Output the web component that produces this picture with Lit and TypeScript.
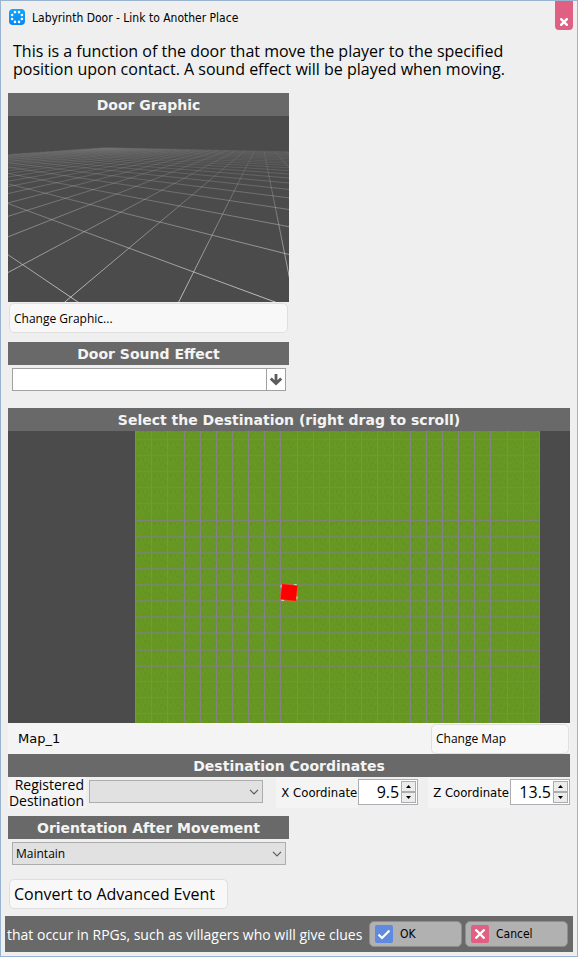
import { LitElement, html, svg, css } from "lit";
import { customElement, property } from "lit/decorators.js";

/* Shared look of the flat buttons and section headings. */
const shared = css`
  *, *::before, *::after { box-sizing: border-box; }
  h2 {
    margin: 0;
    height: 23px;
    background: #696969;
    color: #f4f4f4;
    font: bold 14px/24px "DejaVu Sans", sans-serif;
    text-align: center;
    white-space: nowrap;
  }
  button { font-family: inherit; color: #000; cursor: pointer; }
  .flat {
    height: 30px;
    padding: 0 4px;
    background: #f8f8f8;
    border: 1px solid #dfdfdf;
    border-radius: 5px;
    font: 12px "Open Sans", sans-serif;
    text-align: left;
  }
`;

type Point = [number, number];

/* Projects a floor cell corner (i, j) onto the preview. */
const project = (i: number, j: number): Point => {
  const d = 1 - 0.209 * i + 0.3486 * j;
  return [
    (62 + 101 * i + 271.1 * j) / d / 3 - 6,
    (464 - 20 * i + 28.2 * j) / d / 3 - 6,
  ];
};

@customElement("door-preview")
export class DoorPreview extends LitElement {
  static styles = css`
    :host { display: block; background: #4b4b4b; }
    svg { display: block; width: 100%; height: 186px; }
  `;

  private lines(): [Point, Point][] {
    const out: [Point, Point][] = [];
    for (let i = -22; i <= 8; i++) {
      const near = Math.max(-1, (-0.8 + 0.209 * i) / 0.3486);
      out.push([project(i, near), project(i, 24)]);
    }
    for (let j = 0; j <= 24; j++) {
      const near = Math.min(22, (0.8 + 0.3486 * j) / 0.209);
      out.push([project(near, j), project(-22, j)]);
    }
    return out;
  }

  render() {
    return html`<svg viewBox="0 0 281 186" preserveAspectRatio="xMidYMid slice" role="img" aria-label="Door preview">
      <defs>
        <linearGradient id="fade" gradientUnits="userSpaceOnUse" x1="0" y1="30" x2="0" y2="186">
          <stop offset="0" stop-color="#bbb" stop-opacity="0.08" />
          <stop offset="0.12" stop-color="#bbb" stop-opacity="0.16" />
          <stop offset="0.4" stop-color="#c0c0c0" stop-opacity="0.4" />
          <stop offset="1" stop-color="#d4d4d4" stop-opacity="0.85" />
        </linearGradient>
      </defs>
      ${this.lines().map(([a, b]) => svg`<line x1=${a[0]} y1=${a[1]} x2=${b[0]} y2=${b[1]} stroke="url(#fade)" />`)}
    </svg>`;
  }
}

@customElement("map-view")
export class MapView extends LitElement {
  static styles = css`
    :host { display: block; background: #4b4b4b; }
    svg { display: block; width: 100%; height: 292px; }
  `;

  render() {
    const cols = Array.from({ length: 26 }, (_, n) => Math.floor(127.56 + n * 16.15));
    const rows = Array.from({ length: 18 }, (_, n) => Math.floor(8.5 + n * 16.12));
    return html`<svg viewBox="0 0 562 292" preserveAspectRatio="xMidYMid slice" role="img" aria-label="Destination map">
      <defs>
        <pattern id="grass" patternUnits="userSpaceOnUse" x="127.5" y="8.5" width="16.15" height="16.12">
          <rect width="17" height="17" fill="#679723" />
          <path fill="#5d8d22" opacity=".7" d="M2 3h2v2h-2zM7 2h1v3h-1zM11 4h2v1h-2zM4 8h1v2h-1zM9 7h2v2h-2zM13 9h1v3h-1zM2 12h2v1h-2zM7 12h1v2h-1zM10 12h2v1h-2z" />
          <path fill="#719b21" opacity=".7" d="M5 4h1v2h-1zM9 3h1v2h-1zM13 5h1v2h-1zM2 7h1v2h-1zM6 9h2v1h-2zM11 10h1v2h-1zM5 13h1v1h-1z" />
        </pattern>
      </defs>
      <rect x="127" width="405" height="292" fill="url(#grass)" />
      <g shape-rendering="crispEdges">
        ${rows.map((y, n) => svg`<rect x="127" y=${y} width="405" height=${n > 5 && n < 15 ? 2 : 1} fill=${n > 5 && n < 15 ? "#778762" : "#7d8375"} />`)}
        ${cols.map((x) => svg`<rect x=${x} y="0" width="1" height="292" fill="#848282" />`)}
      </g>
      <g transform="translate(281 161.500) rotate(6)">
        <path d="M-8-8H8V8H-8z" fill="red" stroke="#ff5a1e" stroke-width=".6" />
        <path d="M4-8.500H7M8.500 3V6M-7 8.500H-4M-8.500-7V-4" stroke="#b8ffd0" stroke-width=".8" />
      </g>
    </svg>`;
  }
}

@customElement("coord-field")
export class CoordField extends LitElement {
  @property() label = "";
  @property() value = "";

  static styles = css`
    * { box-sizing: border-box; }
    :host { display: flex; align-items: flex-start; }
    label {
      height: 31px;
      padding: 0 1px 0 5px;
      background: #f4f4f4;
      font-size: 13px;
      line-height: 32px;
      white-space: nowrap;
    }
    .box {
      display: flex;
      width: 60px;
      height: 26px;
      margin-top: 2px;
      padding: 1px;
      background: #fff;
      border: 1px solid #abadb3;
    }
    input {
      flex: 1;
      min-width: 0;
      padding: 0 2px 0 0;
      border: 0;
      outline: 0;
      background: none;
      font: 16px "Open Sans", sans-serif;
      text-align: right;
    }
    .spin { display: flex; flex-direction: column; width: 15px; }
    button {
      display: grid;
      place-items: center;
      flex: 1;
      min-height: 0;
      padding: 0;
      background: #ececec;
      border: 1px solid #acacac;
    }
    svg { display: block; }
  `;

  render() {
    return html`
      <label for="n">${this.label}</label>
      <div class="box">
        <input id="n" type="text" inputmode="decimal" .value=${this.value} />
        <div class="spin">
          <button aria-label="Increase"><svg width="5" height="3"><path d="M0 3 2.500 0 5 3z" /></svg></button>
          <button aria-label="Decrease"><svg width="5" height="3"><path d="M0 0 2.500 3 5 0z" /></svg></button>
        </div>
      </div>`;
  }
}

@customElement("app-root")
export class AppRoot extends LitElement {
  static styles = [shared, css`
    :host {
      display: block;
      font: 12px "DejaVu Sans Condensed", sans-serif;
      color: #000;
    }
    .window {
      display: flex;
      flex-direction: column;
      min-height: 100vh;
      background: #efefef;
      border: 1px solid #99b4d1;
    }
    header { display: flex; align-items: flex-start; height: 37px; padding: 0 4px 0 8px; }
    .logo { flex: none; margin-top: 8px; }
    h1 { flex: 1; margin: 0 0 0 7px; font-size: 12px; font-weight: normal; line-height: 34px; }
    .close {
      display: grid;
      place-items: end center;
      width: 18px;
      height: 29px;
      padding: 0 0 4px;
      background: #e06083;
      border: 0;
      border-radius: 0 0 4px 4px;
    }
    main { display: flex; flex-direction: column; flex: 1; padding: 4px 7px 0; }
    .intro { max-width: 520px; margin: 0 0 15px 5px; font: 16px/18px "Open Sans", sans-serif; }
    .half { width: 50%; }
    .door { display: flex; flex-direction: column; }
    .door .flat { margin: 1px 1px 9px; }
    .combo {
      display: flex;
      height: 23px;
      margin: 3px 3px 17px 4px;
      background: #fff;
      border: 1px solid #a0a0a0;
    }
    .combo input { flex: 1; min-width: 0; padding: 0 3px; border: 0; outline: 0; background: none; font: inherit; }
    .combo button { display: grid; place-items: center; width: 19px; padding: 0; border: 0; border-left: 1px solid #a0a0a0; background: #fff; }
    .map-row {
      display: flex;
      align-items: center;
      justify-content: space-between;
      height: 31px;
      padding: 0 1px 0 10px;
      background: #f4f4f4;
      font: 13px "DejaVu Sans", sans-serif;
    }
    .map-row .flat { width: 138px; }
    .coords { display: flex; height: 39px; }
    .coords .reg {
      width: 78px;
      height: 31px;
      padding-right: 2px;
      background: #f4f4f4;
      font: 14px/16px "Open Sans", sans-serif;
      text-align: right;
    }
    .coords coord-field + coord-field { margin-left: 10px; }
    .select { position: relative; display: flex; height: 23px; }
    .select select {
      width: 100%;
      padding: 0 20px 0 3px;
      appearance: none;
      background: #e1e1e1;
      border: 1px solid #adadad;
      border-radius: 0;
      color: #000;
      font: 12px "Open Sans", sans-serif;
    }
    .select svg { position: absolute; right: 4px; top: 9px; pointer-events: none; }
    .coords .select { flex: 1; margin: 3px 13px 0 3px; }
    .orient .select { margin: 3px 3px 14px 4px; }
    .convert { align-self: flex-start; width: 219px; margin: 0 0 7px 1px; }
    .convert.flat { font-size: 16px; white-space: nowrap; }
    footer {
      display: flex;
      align-items: center;
      gap: 3px;
      height: 36px;
      margin: 0 4px 4px;
      padding: 0 5px 0 2px;
      background: #696969;
    }
    .ticker {
      flex: 1;
      min-width: 0;
      margin: 0 2px 0 0;
      overflow: hidden;
      color: #fff;
      font: 14px "Open Sans", sans-serif;
      white-space: nowrap;
    }
    .action {
      display: flex;
      align-items: center;
      height: 26px;
      padding: 0 5px;
      background: #b1b1b1;
      border: 1px solid #8e8e8e;
      border-radius: 5px;
      font-size: 12px;
    }
    .ok { width: 93px; gap: 7px; }
    .cancel { width: 103px; gap: 7px; }
  `];

  private chevron() {
    return svg`<svg width="10" height="6" viewBox="0 0 10 6" fill="none" stroke="#5c5c5c" stroke-width="1.2"><path d="M1 .8 5 4.800 9 .8" /></svg>`;
  }

  render() {
    const dots = Array.from({ length: 8 }, (_, n) => (n * Math.PI) / 4 + Math.PI / 8);
    return html`
      <div class="window">
        <header>
          <svg class="logo" width="16" height="16" viewBox="0 0 16 16" aria-hidden="true">
            <defs><linearGradient id="blue" x1="0" y1="0" x2="0" y2="1"><stop offset="0" stop-color="#0ea8fb" /><stop offset="1" stop-color="#0a84f2" /></linearGradient></defs>
            <rect width="16" height="16" rx="4" fill="url(#blue)" />
            ${dots.map((t) => svg`<circle cx=${8 + 5.3 * Math.cos(t)} cy=${8 + 5.3 * Math.sin(t)} r="1.3" fill="#fff" />`)}
          </svg>
          <h1>Labyrinth Door - Link to Another Place</h1>
          <button class="close" aria-label="Close">
            <svg width="8" height="8" viewBox="0 0 8 8" stroke="#fff" stroke-width="2.4"><path d="M.4.4 7.600 7.600M7.600.4.4 7.600" /></svg>
          </button>
        </header>
        <main>
          <p class="intro">This is a function of the door that move the player to the specified position upon contact. A sound effect will be played when moving.</p>
          <section class="half door">
            <h2>Door Graphic</h2>
            <door-preview></door-preview>
            <button class="flat">Change Graphic...</button>
          </section>
          <section class="half">
            <h2 id="sound">Door Sound Effect</h2>
            <div class="combo">
              <input type="text" aria-labelledby="sound" />
              <button aria-label="Choose sound">
                <svg width="12" height="12" viewBox="0 0 12 12" fill="none" stroke="#5c5c5c" stroke-width="2.8"><path d="M6 0V9M.8 4.500 6 9.500 11.200 4.500" /></svg>
              </button>
            </div>
          </section>
          <section>
            <h2>Select the Destination (right drag to scroll)</h2>
            <map-view></map-view>
            <div class="map-row"><span>Map_1</span><button class="flat">Change Map</button></div>
          </section>
          <section>
            <h2>Destination Coordinates</h2>
            <div class="coords">
              <label class="reg" for="reg">Registered Destination</label>
              <div class="select"><select id="reg"><option></option></select>${this.chevron()}</div>
              <coord-field label="X Coordinate" value="9.5"></coord-field>
              <coord-field label="Z Coordinate" value="13.5"></coord-field>
            </div>
          </section>
          <section class="half orient">
            <h2 id="orient">Orientation After Movement</h2>
            <div class="select"><select aria-labelledby="orient"><option>Maintain</option></select>${this.chevron()}</div>
          </section>
          <button class="flat convert">Convert to Advanced Event</button>
        </main>
        <footer>
          <p class="ticker">that occur in RPGs, such as villagers who will give clues</p>
          <button class="action ok">
            <svg width="18" height="18" viewBox="0 0 18 18" fill="none"><rect width="18" height="18" rx="2" fill="#5f8ade" /><path d="M3.500 9.500 7 13 14.500 5.500" stroke="#fff" stroke-width="2.2" /></svg>
            OK
          </button>
          <button class="action cancel">
            <svg width="18" height="18" viewBox="0 0 18 18"><rect width="18" height="18" rx="2" fill="#e06083" /><path d="M4.500 4.500 13.500 13.500M13.500 4.500 4.500 13.500" stroke="#fff" stroke-width="2.4" /></svg>
            Cancel
          </button>
        </footer>
      </div>`;
  }
}
